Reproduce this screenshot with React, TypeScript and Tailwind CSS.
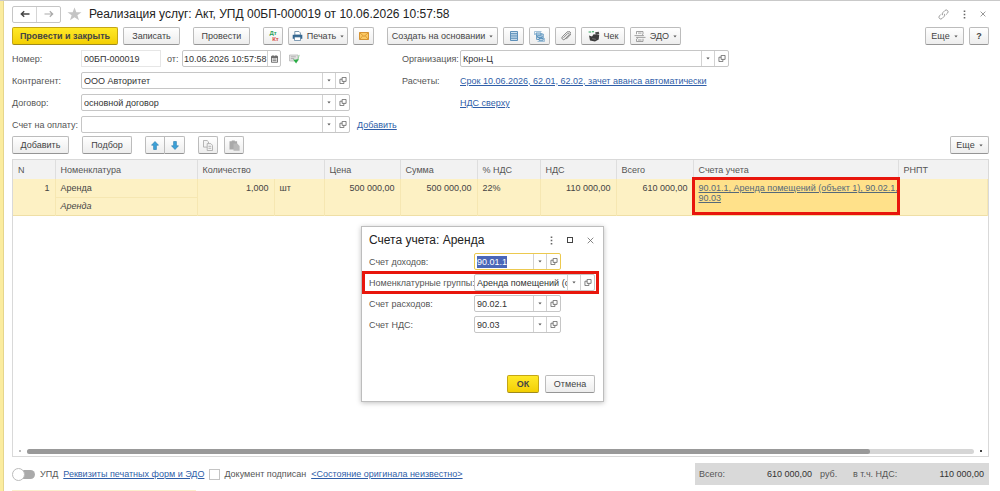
import type { ReactNode } from 'react';
import clsx from 'clsx';

type ButtonProps = {
  children: ReactNode;
  className?: string;
  label?: string;
  primary?: boolean;
};

function Button({ children, className, label, primary }: ButtonProps) {
  return (
    <button
      type="button"
      aria-label={label}
      className={clsx(
        'flex h-[18px] shrink-0 items-center justify-center gap-1 rounded-[2px] border bg-linear-to-b whitespace-nowrap text-[#444]',
        primary
          ? 'border-[#c4a615] border-b-[#9f8a1c] from-[#ffe926] to-[#f3cf00] font-bold'
          : 'border-[#bcbcbc] border-b-[#959595] from-white to-[#ededed]',
        className,
      )}
    >
      {children}
    </button>
  );
}

function Caret() {
  return (
    <svg viewBox="0 0 5 3" className="h-[3px] w-[4px] shrink-0" fill="#555">
      <path d="M0.5 0.2h4L2.5 2.7z" />
    </svg>
  );
}

function OpenIcon() {
  return (
    <svg viewBox="0 0 8 8" className="h-[7px] w-2" fill="none" stroke="#5e5e5e" strokeWidth="0.9">
      <path d="M3 0.5h4.5v4.5H3z" />
      <path d="M3 2.5H0.5v5h4.5V5" />
    </svg>
  );
}

function LinkIcon() {
  return (
    <svg viewBox="0 0 12 12" className="h-[11px] w-[11px]" fill="none" stroke="#8a8a8a" strokeWidth="0.9">
      <path d="M5.2 6.8a2 2 0 0 1 0-2.8L7.5 1.7a2 2 0 0 1 2.9 2.8L8.8 6.1" />
      <path d="M6.8 5.2a2 2 0 0 1 0 2.8L4.5 10.3a2 2 0 0 1-2.9-2.8l1.6-1.6" />
    </svg>
  );
}

function DotsIcon() {
  return (
    <svg viewBox="0 0 3 9" className="h-[9px] w-[3px]" fill="#666">
      <path d="M0.7 0.5h1.6v1.6H0.7zM0.7 3.7h1.6v1.6H0.7zM0.7 6.9h1.6v1.6H0.7z" />
    </svg>
  );
}

function CloseIcon({ className }: { className: string }) {
  return (
    <svg viewBox="0 0 8 8" className={className} fill="none" stroke="#666" strokeWidth="0.9">
      <path d="M0.8 0.8l6.4 6.4M7.2 0.8L0.8 7.2" />
    </svg>
  );
}

function PrinterIcon() {
  return (
    <svg viewBox="0 0 11 10" className="h-[10px] w-[11px]">
      <path d="M2.8 0.5h4.2l1.4 1.4v2.2H2.8z" fill="#fff" stroke="#5b7f9c" strokeWidth="0.8" />
      <path d="M0.7 3.8h9.6v4H0.7z" fill="#336791" />
      <path d="M2.5 6h6v3.5h-6z" fill="#fff" stroke="#4e7698" strokeWidth="0.7" />
    </svg>
  );
}

function MailIcon() {
  return (
    <svg viewBox="0 0 10 8" className="h-2 w-[10px]">
      <path d="M0.5 0.5h9v7h-9z" fill="#fbc964" stroke="#d08a25" strokeWidth="0.9" />
      <path d="M0.7 0.8L5 4.5l4.3-3.7M0.8 7.3l3-3.6M9.2 7.3l-3-3.6" fill="none" stroke="#d08a25" strokeWidth="0.7" />
    </svg>
  );
}

function ListIcon() {
  return (
    <svg viewBox="0 0 8 10" className="h-[10px] w-2">
      <path d="M0.5 0.5h7v9h-7z" fill="#cfe2f1" stroke="#4f86b3" strokeWidth="0.9" />
      <path d="M1 2.5h6M1 4.2h6M1 5.9h6M1 7.6h6" stroke="#4f86b3" strokeWidth="0.8" />
    </svg>
  );
}

function StructureIcon() {
  return (
    <svg viewBox="0 0 11 11" className="h-[11px] w-[11px]" fill="none" stroke="#3e80b2" strokeWidth="0.8">
      <path d="M0.5 4V0.5h7M10.5 7v3.5h-7" stroke="#8db4d1" />
      <path d="M2 2h5v2H2zM3.6 4.9h4.6v1.6H3.6zM5 7.5h4.2v1.8H5z" fill="#dceaf5" />
      <path d="M2.6 4v4.4H5M9.2 7.5V3H7" />
    </svg>
  );
}

function ClipIcon() {
  return (
    <svg viewBox="0 0 11 11" className="h-[10px] w-[10px]" fill="none" stroke="#6b6b6b" strokeWidth="0.9" strokeLinecap="round">
      <path d="M3 7.2l4.4-4.5a1 1 0 0 1 1.5 1.4L4.3 8.9a1.9 1.9 0 0 1-2.8-2.6L6.6 1.2a2.3 2.3 0 0 1 3.5 3.2L6 8.7" />
    </svg>
  );
}

function CashIcon() {
  return (
    <svg viewBox="0 0 12 11" className="h-[11px] w-3">
      <path d="M1 4.6l3 .8 1.6-2.2 5.6.8-.5 4.4-3.7 2-5-1z" fill="#3c3c3c" />
      <path d="M7.2 1.3l3.6-.6.5 2.6-3.6.6z" fill="#4a4a4a" />
      <path d="M0.6 1h2.6M4 0.8h2" stroke="#2da65a" strokeWidth="1.1" />
      <path d="M4.2 7.6l3.6.7" stroke="#999" strokeWidth="0.6" />
    </svg>
  );
}

function EdoIcon() {
  return (
    <svg viewBox="0 0 12 11" className="h-[11px] w-3" fill="none" stroke="#8b8b8b" strokeWidth="0.8">
      <path d="M2.5 3.2V0.5h6.5v2.7M2.5 7.8v2.7h6.5V7.8M4 2.1h3.5M4 9h3.5" />
      <path d="M0.5 4.6h9M2.5 6.4h9M8 3.4l1.6 1.2M4 7.6L2.4 6.4" />
    </svg>
  );
}

function CalendarIcon() {
  return (
    <svg viewBox="0 0 7 8" className="h-2 w-[7px]" fill="none" stroke="#555">
      <path d="M0.5 1.3h6v6h-6z" strokeWidth="0.8" />
      <path d="M0.5 2.2h6" strokeWidth="1.3" />
      <path d="M2 0.2v1.5M5 0.2v1.5M1.5 4h4M1.5 5.7h4" strokeWidth="0.8" />
    </svg>
  );
}

function PostedIcon() {
  return (
    <svg viewBox="0 0 11 10" className="ml-2 h-[10px] w-[11px]">
      <path d="M0.5 1h8.5v6H0.5z" fill="#e3e3e3" stroke="#b0b0b0" strokeWidth="0.7" />
      <path d="M1.8 2.8h5M1.8 4.6h3.4" stroke="#9a9a9a" strokeWidth="0.7" />
      <path d="M4 5.2l2 .6 3.8-.8-2.7 4.4z" fill="#29ad45" />
      <path d="M9 5.5l1.2-4.6" fill="none" stroke="#7fca8c" strokeWidth="0.8" />
    </svg>
  );
}

function ArrowIcon({ down }: { down?: boolean }) {
  return (
    <svg viewBox="0 0 8 9" className={clsx('h-[9px] w-2', down && 'rotate-180')}>
      <path d="M4 0.5l3.5 3.7H5.4v4.3H2.6V4.2H0.5z" fill="#3ba1d8" stroke="#2679ad" strokeWidth="0.6" />
    </svg>
  );
}

function CopyIcon() {
  return (
    <svg viewBox="0 0 10 11" className="h-[11px] w-[10px]" fill="#f4f4f4" stroke="#a5a5a5" strokeWidth="0.8">
      <path d="M0.5 0.5h3.6l1.4 1.4v5.2h-5z" />
      <path d="M4.2 3.6h3.6l1.7 1.7v5.2H4.2zM5.4 6.3h2.8M5.4 8.3h2.8" />
    </svg>
  );
}

function PasteIcon() {
  return (
    <svg viewBox="0 0 11 11" className="h-[11px] w-[11px]" fill="#a9a9a9">
      <path d="M0.5 1.2h2.3V0.4h3v0.8h2.3v8.3H0.5z" />
      <path d="M4.5 3.5h3.7L10.6 6v4.7H4.5z" fill="#b8b8b8" />
    </svg>
  );
}

type FieldProps = {
  id: string;
  value?: string;
  className?: string;
  active?: boolean;
};

function ComboField({ id, value = '', className, active }: FieldProps) {
  return (
    <div
      className={clsx(
        'flex h-[17px] shrink-0 rounded-[2px] border bg-white',
        active ? 'border-[#ecc94f]' : 'border-[#c6c6c6]',
        className,
      )}
    >
      <input
        id={id}
        defaultValue={value}
        autoFocus={active}
        onFocus={active ? (e) => e.target.select() : undefined}
        className="min-w-0 flex-1 pl-0.5 text-[#333] outline-none selection:bg-[#4a66b8] selection:text-white"
      />
      <button type="button" aria-label="Выбрать" className="flex w-[13px] items-center justify-center border-l border-[#d2d2d2]">
        <Caret />
      </button>
      <button type="button" aria-label="Открыть" className="flex w-[14px] items-center justify-center border-l border-[#d2d2d2]">
        <OpenIcon />
      </button>
    </div>
  );
}

function TextLink({ children, className }: { children: ReactNode; className?: string }) {
  return (
    <a href="#" className={clsx('text-[#2f5ea8] underline', className)}>
      {children}
    </a>
  );
}

const columns = [
  { title: 'N', width: 'w-[42px]', span: 1 },
  { title: 'Номенклатура', width: 'w-[142px]', span: 1 },
  { title: 'Количество', width: 'w-[127px]', span: 2 },
  { title: 'Цена', width: 'w-[76px]', span: 1 },
  { title: 'Сумма', width: 'w-[77px]', span: 1 },
  { title: '% НДС', width: 'w-[63px]', span: 1 },
  { title: 'НДС', width: 'w-[76px]', span: 1 },
  { title: 'Всего', width: 'w-[77px]', span: 1 },
  { title: 'Счета учета', width: 'w-[205px]', span: 1 },
  { title: 'РНПТ', width: '', span: 1 },
];

const accounts = [
  { id: 'income', label: 'Счет доходов:', value: '90.01.1', active: true },
  { id: 'group', label: 'Номенклатурные группы:', value: 'Аренда помещений (о', marked: true },
  { id: 'expense', label: 'Счет расходов:', value: '90.02.1' },
  { id: 'vat', label: 'Счет НДС:', value: '90.03' },
];

function Header() {
  return (
    <header className="flex h-[26px] items-center">
      <div className="flex h-[17px] w-[49px] rounded-[2px] border border-[#c6c6c6]">
        <button type="button" aria-label="Назад" className="flex flex-1 items-center justify-center border-r border-[#d5d5d5]">
          <svg viewBox="0 0 10 8" className="h-2 w-[10px]" fill="none" stroke="#444" strokeWidth="1.4">
            <path d="M9.5 4H1.5M4.2 1.2L1.3 4l2.9 2.8" />
          </svg>
        </button>
        <button type="button" aria-label="Вперед" className="flex flex-1 items-center justify-center">
          <svg viewBox="0 0 10 8" className="h-2 w-[10px]" fill="none" stroke="#aaa" strokeWidth="1.2">
            <path d="M0.5 4h8M5.8 1.2L8.7 4 5.8 6.8" />
          </svg>
        </button>
      </div>
      <button type="button" aria-label="В избранное" className="ml-[6px]">
        <svg viewBox="0 0 16 15" className="h-[14px] w-[15px]" fill="#c4c4c4">
          <path d="M8 0.5l2 5h5.5l-4.4 3.4 1.7 5.4L8 11.1l-4.8 3.2 1.7-5.4L0.5 5.5H6z" />
        </svg>
      </button>
      <h1 className="ml-[7px] text-[12px] whitespace-nowrap text-[#222]">
        Реализация услуг: Акт, УПД 00БП-000019 от 10.06.2026 10:57:58
      </h1>
      <div className="mr-[3px] ml-auto flex items-center gap-[14px]">
        <button type="button" aria-label="Ссылка"><LinkIcon /></button>
        <button type="button" aria-label="Меню"><DotsIcon /></button>
        <button type="button" aria-label="Закрыть"><CloseIcon className="h-[6px] w-[6px]" /></button>
      </div>
    </header>
  );
}

function Toolbar() {
  return (
    <div className="flex items-center gap-[5px]">
      <Button primary className="w-[106px]">Провести и закрыть</Button>
      <Button className="w-[57px]">Записать</Button>
      <Button className="ml-2 w-[57px]">Провести</Button>
      <Button className="ml-2 w-[20px]" label="Дт Кт">
        <span className="flex flex-col text-[6px] leading-[6px] font-bold">
          <span className="text-[#2ca05a]">Дт</span>
          <span className="pl-[5px] text-[#d8483f]">Кт</span>
        </span>
      </Button>
      <Button className="w-[60px]"><PrinterIcon />Печать<Caret /></Button>
      <Button className="w-[21px]" label="Отправить"><MailIcon /></Button>
      <Button className="ml-2 w-[111px]">Создать на основании<Caret /></Button>
      <Button className="w-[21px]" label="Список"><ListIcon /></Button>
      <Button className="w-[21px]" label="Структура"><StructureIcon /></Button>
      <Button className="w-[21px]" label="Файлы"><ClipIcon /></Button>
      <Button className="w-[44px]"><CashIcon />Чек</Button>
      <Button className="w-[51px]"><EdoIcon />ЭДО<Caret /></Button>
      <Button className="ml-auto w-[39px]">Еще<Caret /></Button>
      <Button className="w-[20px] font-bold">?</Button>
    </div>
  );
}

function DocumentFields() {
  return (
    <div className="mt-[5px] flex items-start">
      <div className="flex w-[390px] shrink-0 flex-col gap-[5px]">
        <div className="flex h-[17px] items-center">
          <label htmlFor="number" className="w-[69px]">Номер:</label>
          <input id="number" defaultValue="00БП-000019" className="h-[17px] w-[80px] border border-[#e6e6e6] px-0.5 text-[#333] outline-none" />
          <label htmlFor="date" className="w-[21px] pl-[6px]">от:</label>
          <div className="flex h-[17px] w-[99px] rounded-[2px] border border-[#c6c6c6]">
            <input id="date" defaultValue="10.06.2026 10:57:58" className="min-w-0 flex-1 pl-px text-[#333] outline-none" />
            <button type="button" aria-label="Календарь" className="flex w-[13px] items-center justify-center border-l border-[#d2d2d2]">
              <CalendarIcon />
            </button>
          </div>
          <PostedIcon />
        </div>
        <div className="flex h-[17px] items-center">
          <label htmlFor="partner" className="w-[69px]">Контрагент:</label>
          <ComboField id="partner" value="ООО Авторитет" className="w-[269px]" />
        </div>
        <div className="flex h-[17px] items-center">
          <label htmlFor="contract" className="w-[69px]">Договор:</label>
          <ComboField id="contract" value="основной договор" className="w-[269px]" />
        </div>
        <div className="flex h-[17px] items-center">
          <label htmlFor="invoice" className="w-[69px] whitespace-nowrap">Счет на оплату:</label>
          <ComboField id="invoice" className="w-[269px]" />
          <TextLink className="ml-[7px]">Добавить</TextLink>
        </div>
      </div>
      <div className="flex flex-col gap-[5px]">
        <div className="flex h-[17px] items-center">
          <label htmlFor="company" className="w-[58px]">Организация:</label>
          <ComboField id="company" value="Крон-Ц" className="w-[269px]" />
        </div>
        <div className="flex h-[17px] items-center">
          <span className="w-[58px]">Расчеты:</span>
          <TextLink>Срок 10.06.2026, 62.01, 62.02, зачет аванса автоматически</TextLink>
        </div>
        <div className="flex h-[17px] items-center pl-[58px]">
          <TextLink>НДС сверху</TextLink>
        </div>
      </div>
    </div>
  );
}

function TableToolbar() {
  return (
    <div className="mt-[3px] flex items-center">
      <Button className="w-[57px]">Добавить</Button>
      <Button className="ml-[13px] w-[50px]">Подбор</Button>
      <Button className="ml-[13px] w-[20px] rounded-r-none" label="Вверх"><ArrowIcon /></Button>
      <Button className="w-[20px] rounded-l-none border-l-0" label="Вниз"><ArrowIcon down /></Button>
      <Button className="ml-[13px] w-[20px]" label="Копировать"><CopyIcon /></Button>
      <Button className="ml-[6px] w-[20px]" label="Вставить"><PasteIcon /></Button>
      <Button className="ml-auto w-[39px]">Еще<Caret /></Button>
    </div>
  );
}

function ServicesTable() {
  return (
    <div className="mt-[5px] flex flex-1 flex-col border border-[#d9d9d9]">
      <table className="w-full table-fixed border-collapse text-left">
        <colgroup>
          {columns.map((column) =>
            column.span === 2 ? (
              [<col key="qty" className="w-[77px]" />, <col key="unit" className="w-[50px]" />]
            ) : (
              <col key={column.title} className={column.width} />
            ),
          )}
        </colgroup>
        <thead>
          <tr className="h-[19px] bg-[#f2f2f2]">
            {columns.map((column) => (
              <th key={column.title} colSpan={column.span} className="border-r border-[#dedede] pl-[5px] font-normal text-[#555] last:border-r-0">
                {column.title}
              </th>
            ))}
          </tr>
        </thead>
        <tbody className="border-b border-[#efdfa6] bg-[#fdf1c4] text-[#444]">
          <tr className="h-[18px] *:border-r *:border-[#f6e7b2] *:px-[5px]">
            <td className="text-right" rowSpan={2}><div className="h-[30px]">1</div></td>
            <td className="border-b">Аренда</td>
            <td className="text-right">1,000</td>
            <td>шт</td>
            <td className="text-right">500 000,00</td>
            <td className="text-right">500 000,00</td>
            <td>22%</td>
            <td className="text-right">110 000,00</td>
            <td className="text-right">610 000,00</td>
            <td rowSpan={2} className="relative bg-[#ffe18a] align-top">
              <a href="#" className="mt-1 block leading-[10px] whitespace-nowrap text-[#55697a] underline">
                90.01.1, Аренда помещений (объект 1), 90.02.1,
                <br />
                90.03
              </a>
              <div className="pointer-events-none absolute -inset-x-[2px] -top-[2px] bottom-0 border-[3px] border-[#e8160c]" />
            </td>
            <td rowSpan={2} />
          </tr>
          <tr className="h-[18px] *:border-r *:border-[#f6e7b2] *:px-[5px]">
            <td className="italic">Аренда</td>
            <td />
            <td />
            <td />
            <td />
            <td />
            <td />
            <td />
          </tr>
        </tbody>
      </table>
      <div className="mt-auto flex h-[10px] items-center gap-[6px] px-[6px]">
        <span className="h-[2px] w-[2px] bg-[#bbb]" />
        <div className="h-[5px] flex-1 rounded-full bg-[#d6d6d6]">
          <div className="h-full w-[89%] rounded-full bg-[#999]" />
        </div>
        <span className="h-[2px] w-[2px] bg-[#444]" />
      </div>
    </div>
  );
}

function Footer() {
  return (
    <footer className="mt-[6px] flex h-[22px] items-center">
      <label className="flex items-center gap-[5px]">
        <input type="checkbox" role="switch" className="peer sr-only" />
        <span className="flex h-[13px] w-[23px] items-center">
          <span className="relative z-10 h-[13px] w-[13px] shrink-0 rounded-full border border-[#bbb] bg-white" />
          <span className="-ml-[7px] h-[9px] w-[17px] shrink-0 rounded-full bg-[#aaa]" />
        </span>
        УПД
      </label>
      <TextLink className="ml-[5px]">Реквизиты печатных форм и ЭДО</TextLink>
      <label className="ml-[5px] flex items-center gap-1">
        <input type="checkbox" className="h-[11px] w-[11px] appearance-none border border-[#c4c4c4] bg-white" />
        Документ подписан
      </label>
      <TextLink className="ml-[5px]">&lt;Состояние оригинала неизвестно&gt;</TextLink>
      <div className="ml-auto flex h-full w-[294px] items-center bg-[#d9d9d9] px-1 text-[#555]">
        <span className="w-[40px]">Всего:</span>
        <span className="w-[73px] text-right text-[#333]">610 000,00</span>
        <span className="ml-2 w-[33px]">руб.</span>
        <span>в т.ч. НДС:</span>
        <span className="ml-auto pr-px text-[#333]">110 000,00</span>
      </div>
    </footer>
  );
}

function AccountsDialog() {
  return (
    <div
      role="dialog"
      aria-label="Счета учета: Аренда"
      className="absolute top-[225px] left-[361px] z-20 flex h-[176px] w-[243px] flex-col border border-[#bdbdbd] bg-white shadow-[0_1px_5px_rgba(0,0,0,0.25)]"
    >
      <div className="flex h-[24px] shrink-0 items-center pt-0.5 pr-[9px] pl-[7px]">
        <h2 className="text-[12px] text-[#222]">Счета учета: Аренда</h2>
        <div className="ml-auto flex items-center gap-[14px]">
          <button type="button" aria-label="Меню"><DotsIcon /></button>
          <button type="button" aria-label="Развернуть" className="h-[6px] w-[6px] border border-[#444]" />
          <button type="button" aria-label="Закрыть"><CloseIcon className="h-[7px] w-[7px]" /></button>
        </div>
      </div>
      {accounts.map((row) => (
        <div key={row.id} className="relative flex h-[21px] shrink-0 items-center pl-[7px]">
          <label htmlFor={row.id} className="w-[105px] shrink-0 whitespace-nowrap">{row.label}</label>
          <ComboField id={row.id} value={row.value} active={row.active} className={row.marked ? 'w-[121px]' : 'w-[87px]'} />
          {row.marked && (
            <div className="pointer-events-none absolute -inset-y-px right-[4px] left-0 border-[3px] border-[#e8160c]" />
          )}
        </div>
      ))}
      <div className="mt-auto mr-2 mb-[8px] flex justify-end gap-[6px]">
        <Button primary className="w-[32px]">ОК</Button>
        <Button className="w-[50px]">Отмена</Button>
      </div>
    </div>
  );
}

export default function App() {
  return (
    <div className="relative flex min-h-screen border-t border-[#c9c9c9] bg-white font-['Liberation_Sans',Arial,sans-serif] text-[9px] leading-[12px] text-[#555]">
      <div className="w-1 shrink-0 border-r border-[#e6d68c] bg-[#fbec9f]" />
      <main className="flex min-w-0 flex-1 flex-col pr-[11px] pl-2">
        <Header />
        <Toolbar />
        <DocumentFields />
        <TableToolbar />
        <ServicesTable />
        <Footer />
        <div className="mt-[5px] h-px w-[184px] bg-[#fbeecb]" />
      </main>
      <AccountsDialog />
    </div>
  );
}
